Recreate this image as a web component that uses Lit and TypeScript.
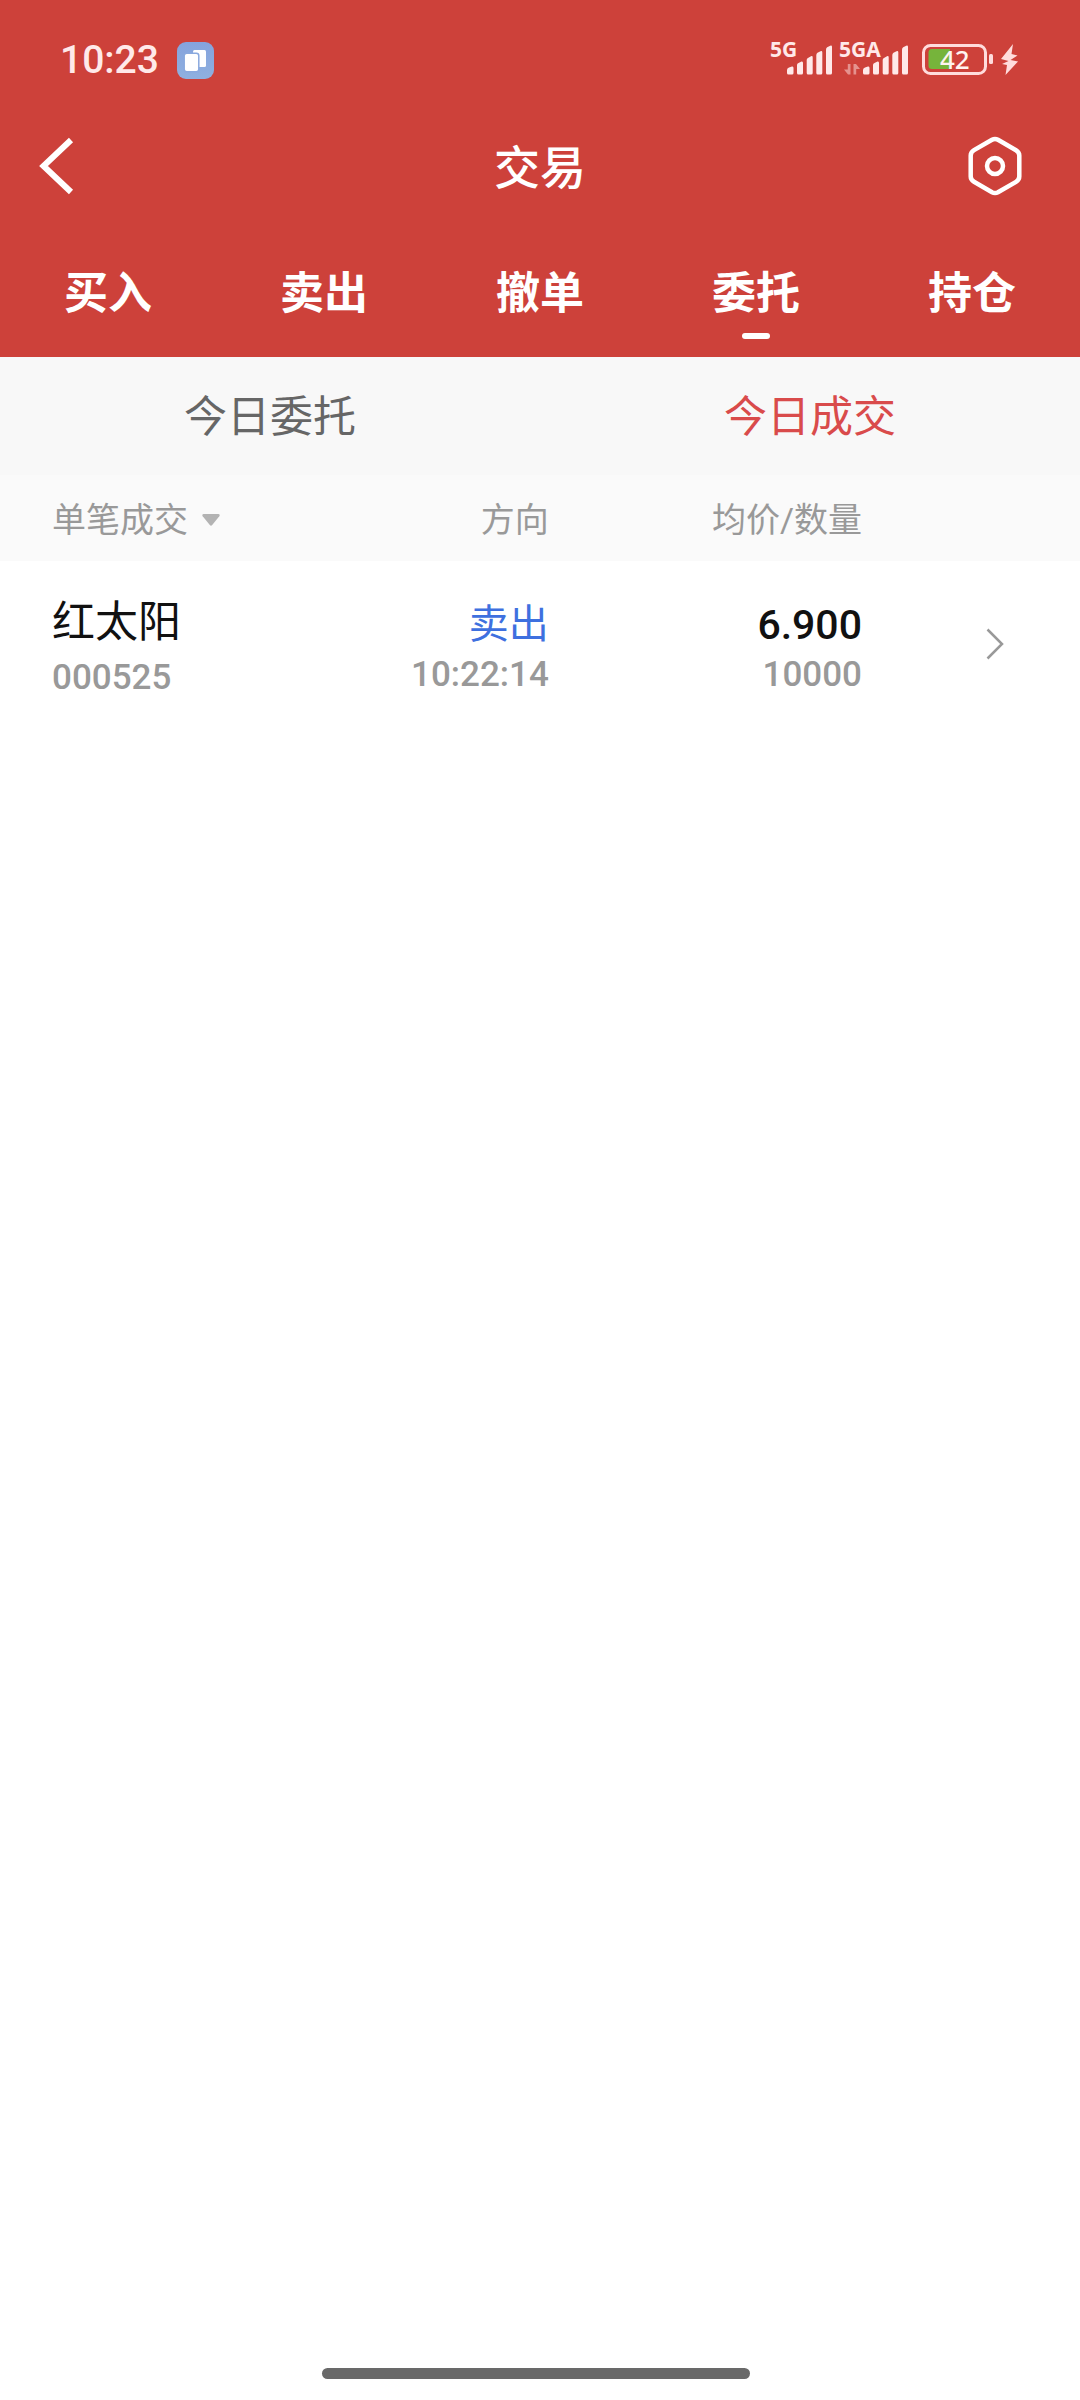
import { LitElement, html, css, svg } from "lit";
import { customElement, state } from "lit/decorators.js";

@customElement("status-bar")
class StatusBar extends LitElement {
  static styles = css`
    :host {
      display: block;
    }
    .bar {
      display: flex;
      align-items: center;
      height: 120px;
      padding: 0 60px;
      box-sizing: border-box;
      color: #ffe9e9;
    }
    .time {
      font: 500 39px/48px Roboto, "Liberation Sans", sans-serif;
    }
    .app {
      width: 37px;
      height: 37px;
      margin-left: 18px;
    }
    .signals {
      width: 250px;
      height: 60px;
      margin-left: auto;
    }
    .net {
      font: 700 21px "Noto Sans", "Open Sans", sans-serif;
      fill: #ffe9e9;
    }
    .level {
      font: 500 26px "Noto Sans", "Open Sans", sans-serif;
      fill: #fff3f0;
    }
  `;

  private bars(x: number) {
    return svg`<g transform="translate(${x} 0)" fill="#ffe9e9">
      <path d="M0 30 Q0 28 2 27.500 L5 26.500 Q6.500 26 6.500 28 V33 Q6.500 34.500 5 34.500 H1.500 Q0 34.500 0 33Z"/>
      <path d="M10 25 Q10 23.500 11.500 23 L14.500 21.500 Q16 21 16 23 V33 Q16 34.500 14.500 34.500 H11.500 Q10 34.500 10 33Z"/>
      <path d="M19.700 20 Q19.700 18.500 21 18 L24 16.300 Q25.700 15.500 25.700 17.500 V33 Q25.700 34.500 24.200 34.500 H21.200 Q19.700 34.500 19.700 33Z"/>
      <path d="M29.300 15 Q29.300 13.500 30.500 12.800 L33.500 11.200 Q35.300 10.500 35.300 12.500 V33 Q35.300 34.500 33.800 34.500 H30.800 Q29.300 34.500 29.300 33Z"/>
      <path d="M39 9.500 Q39 8 40.200 7.300 L43.200 5.700 Q45 5 45 7 V33 Q45 34.500 43.500 34.500 H40.500 Q39 34.500 39 33Z"/>
    </g>`;
  }

  render() {
    return html`<div class="bar">
      <span class="time">10:23</span>
      <svg class="app" viewBox="0 0 37 37" aria-hidden="true">
        <defs>
          <linearGradient id="g" x1="0" y1="0" x2="0" y2="1">
            <stop offset="0" stop-color="#85a3dd" />
            <stop offset="1" stop-color="#8fb0df" />
          </linearGradient>
        </defs>
        <rect width="37" height="37" rx="9" fill="url(#g)" />
        <rect x="16" y="8" width="13" height="17" rx="1.500" fill="#fff" />
        <rect x="7.200" y="11.200" width="14.600" height="18.600" rx="2.500" fill="#fff" stroke="#8aa9de" stroke-width="1.500" />
      </svg>
      <svg class="signals" viewBox="0 -10 250 60" role="img" aria-label="5G 5GA 42%">
        <text class="net" x="0" y="17">5G</text>
        ${this.bars(17)}
        <text class="net" x="69" y="17">5GA</text>
        ${this.bars(93)}
        <g fill="#e5928e">
          <path d="M80.500 24 V34.500 H78 L74 29.500 H77.800 V24Z" />
          <path d="M83.500 34.500 V24 H86 L90 29 H86.200 V34.500Z" />
        </g>
        <rect x="153.500" y="5.500" width="62" height="28" rx="7" fill="none" stroke="#ffdcdc" stroke-width="3" />
        <path d="M180 9 V29 H162 Q158.500 29 158.500 25.500 V12.500 Q158.500 9 162 9Z" fill="#76b43b" />
        <rect x="219" y="14" width="4" height="10" rx="1.500" fill="#ffdcdc" />
        <text class="level" x="170" y="29">42</text>
        <path d="M243 4 L231 19 L238.500 21 L232 24 L237 25 L235.500 35 L248 21.500 L240.500 20 L247.500 15.500 L241.500 14Z" fill="#ffdcdc" />
      </svg>
    </div>`;
  }
}

interface Deal {
  name: string;
  code: string;
  side: string;
  time: string;
  price: string;
  amount: string;
}

@customElement("app-root")
class AppRoot extends LitElement {
  static styles = css`
    :host {
      display: flex;
      flex-direction: column;
      min-height: 100vh;
      background: #fff;
      font-family: Roboto, "Noto Sans CJK SC", sans-serif;
      color: #111;
    }
    button {
      margin: 0;
      padding: 0;
      border: 0;
      background: none;
      font: inherit;
      color: inherit;
      cursor: pointer;
    }
    svg {
      display: block;
    }
    .top {
      background: #cd413a;
      color: #fff;
    }
    .nav {
      display: grid;
      grid-template-columns: 1fr auto 1fr;
      align-items: center;
      height: 92px;
      padding: 0 36px;
    }
    .title {
      margin: 0;
      padding-top: 4px;
      font-size: 46px;
      line-height: 64px;
      font-weight: 500;
    }
    .settings {
      justify-self: end;
      margin-right: 20px;
    }
    .back {
      justify-self: start;
    }
    .tabs {
      display: flex;
    }
    .tab {
      flex: 1;
      display: flex;
      flex-direction: column;
      align-items: center;
      gap: 7px;
      padding: 50px 0 18px;
      font-size: 44px;
      line-height: 64px;
      font-weight: 700;
    }
    .mark {
      width: 28px;
      height: 6px;
      border-radius: 3px;
    }
    .tab.on .mark {
      background: #fff;
    }
    .subtabs {
      display: flex;
      background: #f8f8f8;
    }
    .subtab {
      flex: 1;
      padding: 28px 0 26px;
      font-size: 43px;
      line-height: 64px;
      color: #666;
    }
    .subtab.on {
      color: #d94b4b;
    }
    .deals {
      width: 100%;
      table-layout: fixed;
      border-collapse: collapse;
    }
    .c-name {
      width: 30%;
    }
    .c-side {
      width: 21%;
    }
    .c-price {
      width: 29%;
    }
    th {
      padding: 19px 2px 15px 0;
      background: #fafafa;
      font-size: 34px;
      line-height: 52px;
      font-weight: 400;
      color: #999;
      text-align: right;
    }
    td {
      padding: 39px 2px 33px 0;
      line-height: 50px;
      text-align: right;
      vertical-align: top;
    }
    .first {
      padding-left: 52px;
      text-align: left;
    }
    td.first {
      padding-top: 33px;
      line-height: 56px;
    }
    .filter {
      display: flex;
      align-items: center;
      gap: 14px;
    }
    .name,
    .side,
    .price,
    .sub {
      display: block;
    }
    .name {
      font-size: 43px;
    }
    .side {
      font-size: 40px;
      color: #3e70df;
    }
    .price {
      font-size: 41px;
      font-weight: 500;
    }
    .sub {
      font-size: 35px;
      font-weight: 500;
      color: #999;
    }
    td.go {
      padding: 67px 76px 0 0;
    }
    .open {
      display: block;
      margin-left: auto;
    }
    .foot {
      margin-top: auto;
      padding: 0 8px 21px 0;
    }
    .home {
      width: 428px;
      height: 11px;
      margin: 0 auto;
      border-radius: 6px;
      background: #696969;
    }
  `;

  @state() private tab = "委托";
  @state() private sub = "今日成交";

  private deals: Deal[] = [
    { name: "红太阳", code: "000525", side: "卖出", time: "10:22:14", price: "6.900", amount: "10000" },
  ];

  render() {
    return html`
      <header class="top">
        <status-bar></status-bar>
        <div class="nav">
          <button class="back" aria-label="返回">
            <svg width="40" height="60" viewBox="0 0 40 60" fill="none" stroke="#fff" stroke-width="6">
              <path d="M35 4 L7.500 30 L35 56" />
            </svg>
          </button>
          <h1 class="title">交易</h1>
          <button class="settings" aria-label="设置">
            <svg width="58" height="62" viewBox="0 0 58 62" fill="none" stroke="#fff" stroke-width="4.500">
              <path
                d="M26 4.800 Q29 3.200 32 4.800 L50 15.200 Q53.300 17.200 53.300 20.500 V41.500 Q53.300 44.800 50 46.800 L32 57.200 Q29 58.800 26 57.200 L8 46.800 Q4.700 44.800 4.700 41.500 V20.500 Q4.700 17.200 8 15.200Z"
              />
              <circle cx="29" cy="31" r="8" />
            </svg>
          </button>
        </div>
        <nav class="tabs">
          ${["买入", "卖出", "撤单", "委托", "持仓"].map(
            (t) => html`<button class="tab ${t === this.tab ? "on" : ""}" @click=${() => (this.tab = t)}>
              <span>${t}</span><span class="mark"></span>
            </button>`
          )}
        </nav>
      </header>
      <div class="subtabs">
        ${["今日委托", "今日成交"].map(
          (t) => html`<button class="subtab ${t === this.sub ? "on" : ""}" @click=${() => (this.sub = t)}>${t}</button>`
        )}
      </div>
      <table class="deals">
        <colgroup>
          <col class="c-name" />
          <col class="c-side" />
          <col class="c-price" />
          <col />
        </colgroup>
        <thead>
          <tr>
            <th class="first">
              <button class="filter">
                单笔成交
                <svg width="18" height="12" viewBox="0 0 18 12" fill="#b3b3b3">
                  <path d="M1.500 0 H16.500 Q18.500 0.500 17.300 2.200 L10.200 11 Q9 12.300 7.800 11 L0.700 2.200 Q-0.500 0.500 1.500 0Z" />
                </svg>
              </button>
            </th>
            <th>方向</th>
            <th>均价/数量</th>
            <th></th>
          </tr>
        </thead>
        <tbody>
          ${this.deals.map(
            (d) => html`<tr>
              <td class="first"><span class="name">${d.name}</span><span class="sub">${d.code}</span></td>
              <td><span class="side">${d.side}</span><span class="sub">${d.time}</span></td>
              <td><span class="price">${d.price}</span><span class="sub">${d.amount}</span></td>
              <td class="go">
                <button class="open" aria-label="详情">
                  <svg width="19" height="32" viewBox="0 0 19 32" fill="none" stroke="#999" stroke-width="2.500">
                    <path d="M2.500 1.500 L17 16 L2.500 30.500" />
                  </svg>
                </button>
              </td>
            </tr>`
          )}
        </tbody>
      </table>
      <div class="foot"><div class="home"></div></div>
    `;
  }
}
